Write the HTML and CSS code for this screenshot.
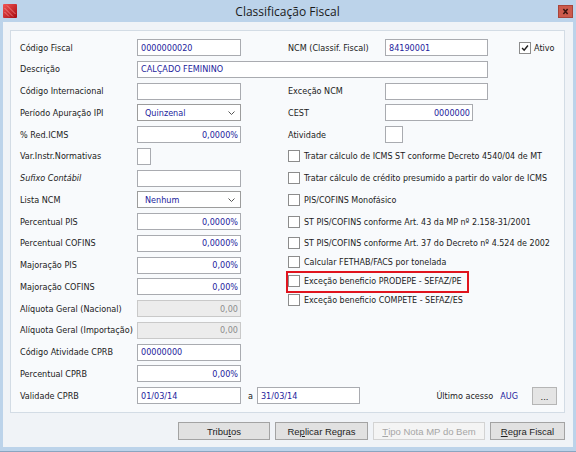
FILE: index.html
```html
<!DOCTYPE html>
<html lang="pt-BR">
<head>
  <meta charset="UTF-8" />
  <title>Classificação Fiscal</title>
  <link rel="stylesheet" href="styles.css">
</head>
<body>
  <div class="window">
    <div class="titlebar">
      <svg class="app-icon" viewBox="0 0 14 14">
        <defs>
          <linearGradient id="ruby" x1="0" y1="0" x2="1" y2="1">
            <stop offset="0" stop-color="#f25555"/>
            <stop offset="1" stop-color="#a50a10"/>
          </linearGradient>
        </defs>
        <rect width="14" height="14" rx="1" fill="url(#ruby)"/>
        <path d="M1.5 4 L10 12.5 M4 1.5 L12.5 10 M1.5 8 L6 12.5" stroke="#ffb0b0" stroke-width="0.8" opacity="0.7" fill="none"/>
      </svg>
      <span class="title">Classificação Fiscal</span>
      <span class="close">
        <svg viewBox="0 0 15 13"><path d="M5 3.5 L10 9.5 M10 3.5 L5 9.5" stroke="#3a1410" stroke-width="1.8"/></svg>
      </span>
    </div>

    <div class="client">
      <div class="panel">
        <!-- row 1 -->
        <span class="lbl">Código Fiscal</span>
        <div class="field c2 val">0000000020</div>
        <span class="lbl c4">NCM (Classif. Fiscal)</span>
        <div class="field c5 val">84190001</div>
        <div class="ativo c6"><span class="box checked"><svg viewBox="0 0 12 12"><path d="M2.5 6 L5 8.7 L9.5 3" stroke="#1e1e1e" stroke-width="1.7" fill="none"/></svg></span>Ativo</div>

        <!-- row 2 -->
        <span class="lbl">Descrição</span>
        <div class="field wide val">CALÇADO FEMININO</div>

        <!-- row 3 -->
        <span class="lbl">Código Internacional</span>
        <div class="field c2"></div>
        <span class="lbl c4">Exceção NCM</span>
        <div class="field c5"></div>

        <!-- row 4 -->
        <span class="lbl">Período Apuração IPI</span>
        <div class="field select c2 val">Quinzenal<svg viewBox="0 0 7 4"><polyline points="0.5,0.5 3.5,3.5 6.5,0.5" stroke="#555" fill="none"/></svg></div>
        <span class="lbl c4">CEST</span>
        <div class="field c5 cest num val">0000000</div>

        <!-- row 5 -->
        <span class="lbl">% Red.ICMS</span>
        <div class="field c2 num val">0,0000%</div>
        <span class="lbl c4">Atividade</span>
        <div class="field c5 tiny"></div>

        <!-- rows 6-16 left -->
        <span class="lbl">Var.Instr.Normativas</span>
        <div class="field c2 small"></div>

        <span class="lbl italic">Sufixo Contábil</span>
        <div class="field c2"></div>

        <span class="lbl">Lista NCM</span>
        <div class="field select c2 val">Nenhum<svg viewBox="0 0 7 4"><polyline points="0.5,0.5 3.5,3.5 6.5,0.5" stroke="#555" fill="none"/></svg></div>

        <span class="lbl">Percentual PIS</span>
        <div class="field c2 num val">0,0000%</div>

        <span class="lbl">Percentual COFINS</span>
        <div class="field c2 num val">0,0000%</div>

        <span class="lbl">Majoração PIS</span>
        <div class="field c2 num val">0,00%</div>

        <span class="lbl">Majoração COFINS</span>
        <div class="field c2 num val">0,00%</div>

        <span class="lbl">Alíquota Geral (Nacional)</span>
        <div class="field c2 num disabled">0,00</div>

        <span class="lbl">Alíquota Geral (Importação)</span>
        <div class="field c2 num disabled">0,00</div>

        <span class="lbl">Código Atividade CPRB</span>
        <div class="field c2 val">00000000</div>

        <span class="lbl">Percentual CPRB</span>
        <div class="field c2 num val">0,00%</div>

        <!-- checkbox block, right side rows 6-16 -->
        <div class="checks">
          <div class="chk"><span class="box"></span>Tratar cálculo de ICMS ST conforme Decreto 4540/04 de MT</div>
          <div class="chk"><span class="box"></span>Tratar cálculo de crédito presumido a partir do valor de ICMS</div>
          <div class="chk"><span class="box"></span>PIS/COFINS Monofásico</div>
          <div class="chk"><span class="box"></span>ST PIS/COFINS conforme Art. 43 da MP nº 2.158-31/2001</div>
          <div class="chk"><span class="box"></span>ST PIS/COFINS conforme Art. 37 do Decreto nº 4.524 de 2002</div>
          <div class="chk tight"><span class="box"></span>Calcular FETHAB/FACS por tonelada</div>
          <div class="chk tight marked"><span class="box"></span>Exceção beneficio PRODEPE - SEFAZ/PE<span class="highlight"></span></div>
          <div class="chk tight"><span class="box"></span>Exceção beneficio COMPETE - SEFAZ/ES</div>
        </div>

        <!-- row 17 -->
        <span class="lbl">Validade CPRB</span>
        <div class="field c2 val">01/03/14</div>
        <div class="until"><span>a</span><div class="field val">31/03/14</div></div>
        <div class="last-access">
          <span>Último acesso</span>
          <span class="user">AUG</span>
          <span class="btn dots">...</span>
        </div>
      </div>

      <div class="actions">
        <span class="btn w-trib">Tribu<u>t</u>os</span>
        <span class="btn w-repl">Re<u>p</u>licar Regras</span>
        <span class="btn w-tipo off"><u>T</u>ipo Nota MP do Bem</span>
        <span class="btn w-regra"><u>R</u>egra Fiscal</span>
      </div>
    </div>
  </div>
</body>
</html>
```

FILE: styles.css
```css
body {
  margin: 0;
  font-family: "DejaVu Sans Condensed", "DejaVu Sans", sans-serif;
  font-stretch: condensed;
  font-size: 9px;
  color: #1b1b1b;
  overflow: hidden;
}

.window {
  width: 576px;
  height: 452px;
  box-sizing: border-box;
  background: #bcd3ea;
  padding: 0 3px 4px;
  border-bottom: 1px solid #8aa5c0;
  display: flex;
  flex-direction: column;
}

.titlebar {
  height: 22px;
  display: flex;
  align-items: center;
}

.app-icon {
  width: 14px;
  height: 14px;
}

.title {
  flex: 1;
  text-align: center;
  font-family: "Open Sans", sans-serif;
  font-stretch: normal;
  font-size: 12px;
  color: #1a1a1a;
}

.close {
  width: 15px;
  height: 13px;
  background: #cc5a4c;
  border: 1px solid #a9443a;
  box-sizing: border-box;
  display: flex;
}

.close svg {
  width: 100%;
  height: 100%;
}

.client {
  flex: 1;
  background: #f0f3f7;
  display: flex;
  flex-direction: column;
}

.panel {
  margin: 8px 8px 0 7px;
  padding: 8px 7px 8px 9px;
  background: #f8fafc;
  border: 1px solid #d3dce5;
  display: grid;
  grid-template-columns: 117px 104px 47px 97px 103px 1fr;
  grid-auto-rows: 17px;
  row-gap: 4.75px;
}

.lbl {
  grid-column: 1;
  align-self: center;
  white-space: nowrap;
}

.lbl.c4 { grid-column: 4; }
.italic { font-style: italic; }

.c2 { grid-column: 2; }
.c4 { grid-column: 4; }
.c5 { grid-column: 5; }
.c6 { grid-column: 6; }
.wide { grid-column: 2 / 6; }

.field {
  box-sizing: border-box;
  height: 17px;
  background: #fff;
  border: 1px solid #a9abb0;
  padding: 0 3px;
  display: flex;
  align-items: center;
  white-space: nowrap;
}

.val { color: #23239c; }

.num { justify-content: flex-end; padding-right: 2px; }

.disabled {
  background: #ececec;
  border-color: #c9c9c9;
  color: #8d8d8d;
}

.select {
  padding-left: 7px;
  justify-content: space-between;
  border-color: #9c9c9c;
}

.select svg {
  width: 7px;
  height: 4px;
  margin-right: 2px;
}

.cest { width: 88px; }
.tiny { width: 18px; }
.small { width: 14px; }

.box {
  width: 12px;
  height: 12px;
  box-sizing: border-box;
  border: 1px solid #8c8c8c;
  background: #fff;
  display: inline-flex;
  flex-shrink: 0;
}

.box svg {
  width: 100%;
  height: 100%;
}

.ativo {
  display: flex;
  align-items: center;
  gap: 3px;
  margin-left: 31px;
  white-space: nowrap;
}

.checks {
  grid-column: 4 / 7;
  grid-row: 6 / 17;
  display: flex;
  flex-direction: column;
  font-size: 8.9px;
}

.chk {
  height: 17px;
  display: flex;
  align-items: center;
  gap: 4px;
  white-space: nowrap;
}

.chk + .chk { margin-top: 4.75px; }
.chk.tight { margin-top: 2px; }

.marked { position: relative; }

.highlight {
  position: absolute;
  left: -2px;
  top: -1.5px;
  width: 183px;
  height: 22px;
  box-sizing: border-box;
  border: 2px solid #e0141e;
}

.until {
  grid-column: 3 / 5;
  display: flex;
  align-items: center;
}

.until span { margin: 0 4px 0 7px; }
.until .field { width: 103px; }

.last-access {
  grid-column: 5 / 7;
  display: flex;
  align-items: center;
  justify-content: flex-end;
  white-space: nowrap;
}

.user {
  color: #23239c;
  margin-left: 7px;
  margin-right: 14px;
}

.btn {
  box-sizing: border-box;
  height: 18px;
  background: #e1e1e1;
  border: 1px solid #a3a3a3;
  display: flex;
  align-items: center;
  justify-content: center;
  font-family: "Liberation Sans", sans-serif;
  font-stretch: normal;
  font-size: 9.5px;
  color: #1e1e1e;
}

.dots {
  width: 25px;
  align-items: flex-end;
  padding-bottom: 2px;
  background: #e4e4e4;
  border-color: #b5b5b5;
}

.actions {
  display: flex;
  justify-content: flex-end;
  gap: 5px;
  margin: 9px 8px 0 0;
}

.w-trib { width: 92px; }
.w-repl { width: 93px; }
.w-tipo { width: 112px; }
.w-regra { width: 75px; }

.off {
  background: #f4f4f4;
  border-color: #d3d3d3;
  color: #a6a6a6;
}
```
